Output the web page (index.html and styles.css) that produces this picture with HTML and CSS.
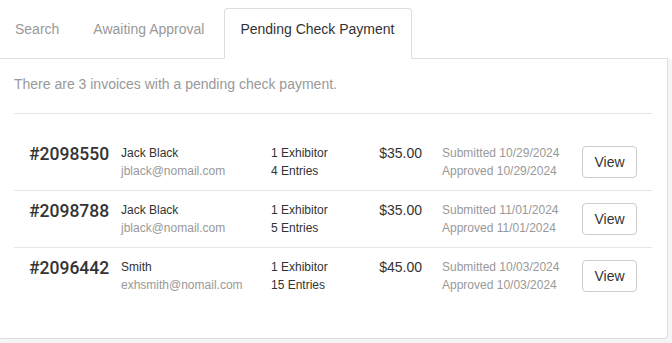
FILE: index.html
```html
<!DOCTYPE html>
<html>
<head>
<meta charset="utf-8">
<link rel="stylesheet" href="styles.css">
</head>
<body>
<div class="top">
  <ul class="tabs">
    <li><a>Search</a></li>
    <li class="wide"><a>Awaiting Approval</a></li>
    <li class="active"><a>Pending Check Payment</a></li>
  </ul>
</div>
<div class="panel">
  <p class="msg">There are 3 invoices with a pending check payment.</p>
  <div class="rule"></div>
  <div class="list">
    <div class="row">
      <div class="num">#2098550</div>
      <div class="two"><div>Jack Black</div><div class="muted">jblack@nomail.com</div></div>
      <div class="two"><div>1 Exhibitor</div><div>4 Entries</div></div>
      <div class="price">$35.00</div>
      <div></div>
      <div class="two muted"><div>Submitted 10/29/2024</div><div>Approved 10/29/2024</div></div>
      <button class="btn">View</button>
    </div>
    <div class="row">
      <div class="num">#2098788</div>
      <div class="two"><div>Jack Black</div><div class="muted">jblack@nomail.com</div></div>
      <div class="two"><div>1 Exhibitor</div><div>5 Entries</div></div>
      <div class="price">$35.00</div>
      <div></div>
      <div class="two muted"><div>Submitted 11/01/2024</div><div>Approved 11/01/2024</div></div>
      <button class="btn">View</button>
    </div>
    <div class="row">
      <div class="num">#2096442</div>
      <div class="two"><div>Smith</div><div class="muted">exhsmith@nomail.com</div></div>
      <div class="two"><div>1 Exhibitor</div><div>15 Entries</div></div>
      <div class="price">$45.00</div>
      <div></div>
      <div class="two muted"><div>Submitted 10/03/2024</div><div>Approved 10/03/2024</div></div>
      <button class="btn">View</button>
    </div>
  </div>
</div>
</body>
</html>
```
FILE: styles.css
```css
html, body {
  margin: 0;
  padding: 0;
}
body {
  background: #f5f5f5;
  font-family: "Liberation Sans", Arial, Helvetica, sans-serif;
  color: #333;
}
.top {
  background: #fff;
  padding-top: 8px;
}
.tabs {
  display: flex;
  list-style: none;
  margin: 0 0 0 -2px;
  padding: 0 0 0 1px;
  width: 670px;
  box-sizing: border-box;
  border-bottom: 1px solid #ddd;
}
.tabs li {
  margin-right: 2px;
  margin-bottom: -1px;
}
.tabs li.wide {
  margin-right: 4px;
}
.tabs a {
  display: block;
  padding: 10px 15px 19px;
  line-height: 20px;
  font-size: 14px;
  color: #999;
  border: 1px solid transparent;
  border-radius: 4px 4px 0 0;
}
.tabs .active a {
  color: #333;
  background: #fff;
  border-color: #ddd;
  border-bottom-color: transparent;
  padding-right: 16px;
}
.panel {
  width: 670px;
  box-sizing: border-box;
  margin: -1px 0 0 -2px;
  border: 1px solid #ddd;
  border-radius: 0 0 4px 4px;
  background: #fff;
  padding: 15px;
}
.msg {
  margin: 0;
  font-size: 14px;
  line-height: 20px;
  color: #999;
}
.rule {
  margin-top: 19px;
  border-top: 1px solid #e6e6e6;
}
.list {
  margin: 20px 0 19px;
}
.row {
  display: grid;
  grid-template-columns: 92px 150px 85px 66px 20px 140px 55px;
  padding: 10px 0 10px 15px;
  font-size: 12px;
  line-height: 18px;
}
.row + .row {
  border-top: 1px solid #e6e6e6;
}
.num {
  font-family: Roboto, "Liberation Sans", Arial, sans-serif;
  font-size: 17.5px;
  line-height: 20px;
  font-weight: 500;
  color: #333;
}
.price {
  font-size: 14px;
  line-height: 18px;
  text-align: right;
}
.muted {
  color: #999;
}
.btn {
  align-self: center;
  width: 55px;
  height: 32px;
  padding: 0;
  border: 1px solid #ccc;
  border-radius: 4px;
  background: #fff;
  font-family: inherit;
  font-size: 14px;
  color: #333;
}
```
